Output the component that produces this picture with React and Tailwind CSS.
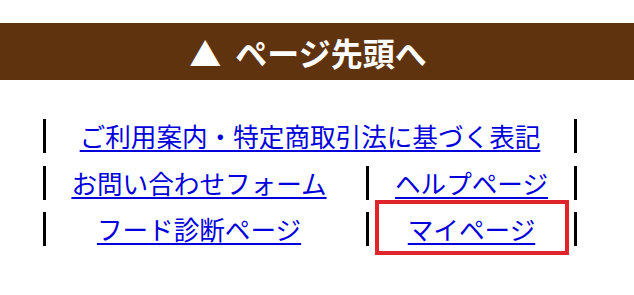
const Bar = () => <div className="w-[3px] h-full bg-black shrink-0" />

function Link({ children }) {
  return (
    <a href="#" className="text-[#0000dd] underline underline-offset-[3px] whitespace-nowrap">
      {children}
    </a>
  )
}

export default function App() {
  return (
    <div
      className="w-[634px] h-[295px] bg-white overflow-hidden pt-[23px]"
      style={{ fontFamily: '"Noto Sans CJK JP", "Noto Sans", sans-serif' }}
    >
      <div className="h-[57px] bg-[#60330f] w-full">
        <div className="w-[616px] h-full flex items-center justify-center text-white font-bold text-[32px] leading-none">
          <span>▲</span>
          <span className="ml-[14px]">ページ先頭へ</span>
        </div>
      </div>

      <div className="mt-[39px] ml-[43px] w-[534px] flex flex-col gap-[12.5px] text-[25.6px] leading-none">
        <div className="h-[34px] flex items-center">
          <Bar />
          <div className="flex-1 flex justify-center">
            <Link>ご利用案内・特定商取引法に基づく表記</Link>
          </div>
          <Bar />
        </div>

        <div className="h-[34px] flex items-center">
          <Bar />
          <div className="w-[320px] flex justify-center pr-[14px]">
            <Link>お問い合わせフォーム</Link>
          </div>
          <Bar />
          <div className="flex-1 flex justify-center">
            <Link>ヘルプページ</Link>
          </div>
          <Bar />
        </div>

        <div className="h-[34px] flex items-center relative">
          <Bar />
          <div className="w-[320px] flex justify-center pr-[14px]">
            <Link>フード診断ページ</Link>
          </div>
          <Bar />
          <div className="flex-1 flex justify-center">
            <Link>マイページ</Link>
          </div>
          <Bar />
          <div className="absolute left-[332px] top-[-12px] w-[194px] h-[55px] border-[4.5px] border-[#e0242c]" />
        </div>
      </div>
    </div>
  )
}
